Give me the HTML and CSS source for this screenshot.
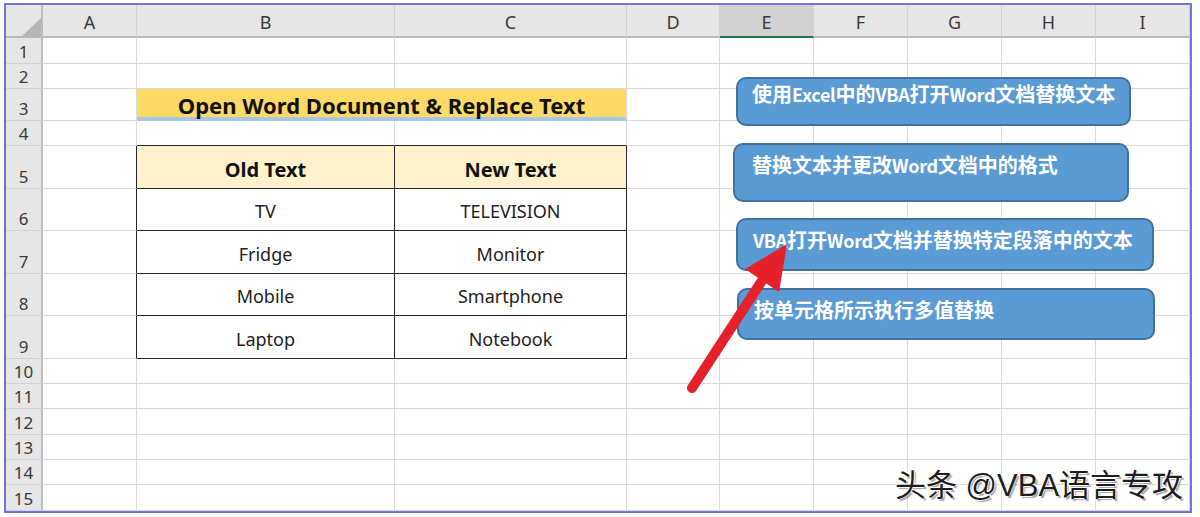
FILE: index.html
```html
<!DOCTYPE html>
<html lang="zh-CN">
<head>
  <meta charset="UTF-8">
  <meta name="viewport" content="width=device-width, initial-scale=1.0">
  <title>Open Word Document &amp; Replace Text</title>
  <link rel="stylesheet" href="styles.css">
</head>
<body>
  <div class="page">
    <!-- 工作表 -->
    <div class="sheet">
      <div class="corner"></div><div class="ch">A</div><div class="ch">B</div><div class="ch">C</div><div class="ch">D</div><div class="ch sel">E</div><div class="ch">F</div><div class="ch">G</div><div class="ch">H</div><div class="ch">I</div>

      <div class="rh">1</div><div class="c"></div><div class="c"></div><div class="c"></div><div class="c"></div><div class="c"></div><div class="c"></div><div class="c"></div><div class="c"></div><div class="c"></div>
      <div class="rh">2</div><div class="c"></div><div class="c"></div><div class="c"></div><div class="c"></div><div class="c"></div><div class="c"></div><div class="c"></div><div class="c"></div><div class="c"></div>
      <div class="rh">3</div><div class="c"></div><div class="c title">Open Word Document &amp; Replace Text</div><div class="c"></div><div class="c"></div><div class="c"></div><div class="c"></div><div class="c"></div><div class="c"></div>
      <div class="rh">4</div><div class="c"></div><div class="c tt"></div><div class="c tt"></div><div class="c"></div><div class="c"></div><div class="c"></div><div class="c"></div><div class="c"></div><div class="c"></div>

      <div class="rh">5</div><div class="c tl"></div><div class="t th">Old Text</div><div class="t th">New Text</div><div class="c"></div><div class="c"></div><div class="c"></div><div class="c"></div><div class="c"></div><div class="c"></div>
      <div class="rh">6</div><div class="c tl"></div><div class="t">TV</div><div class="t">TELEVISION</div><div class="c"></div><div class="c"></div><div class="c"></div><div class="c"></div><div class="c"></div><div class="c"></div>
      <div class="rh">7</div><div class="c tl"></div><div class="t">Fridge</div><div class="t">Monitor</div><div class="c"></div><div class="c"></div><div class="c"></div><div class="c"></div><div class="c"></div><div class="c"></div>
      <div class="rh">8</div><div class="c tl"></div><div class="t">Mobile</div><div class="t">Smartphone</div><div class="c"></div><div class="c"></div><div class="c"></div><div class="c"></div><div class="c"></div><div class="c"></div>
      <div class="rh">9</div><div class="c tl"></div><div class="t">Laptop</div><div class="t">Notebook</div><div class="c"></div><div class="c"></div><div class="c"></div><div class="c"></div><div class="c"></div><div class="c"></div>

      <div class="rh">10</div><div class="c"></div><div class="c"></div><div class="c"></div><div class="c"></div><div class="c"></div><div class="c"></div><div class="c"></div><div class="c"></div><div class="c"></div>
      <div class="rh">11</div><div class="c"></div><div class="c"></div><div class="c"></div><div class="c"></div><div class="c"></div><div class="c"></div><div class="c"></div><div class="c"></div><div class="c"></div>
      <div class="rh">12</div><div class="c"></div><div class="c"></div><div class="c"></div><div class="c"></div><div class="c"></div><div class="c"></div><div class="c"></div><div class="c"></div><div class="c"></div>
      <div class="rh">13</div><div class="c"></div><div class="c"></div><div class="c"></div><div class="c"></div><div class="c"></div><div class="c"></div><div class="c"></div><div class="c"></div><div class="c"></div>
      <div class="rh">14</div><div class="c"></div><div class="c"></div><div class="c"></div><div class="c"></div><div class="c"></div><div class="c"></div><div class="c"></div><div class="c"></div><div class="c"></div>
      <div class="rh">15</div><div class="c"></div><div class="c"></div><div class="c"></div><div class="c"></div><div class="c"></div><div class="c"></div><div class="c"></div><div class="c"></div><div class="c"></div>
    </div>

    <!-- 浮动的形状 -->
    <div class="shape s1">使用<span class="en">Excel</span>中的<span class="en">VBA</span>打开<span class="en">Word</span>文档替换文本</div>
    <div class="shape s2">替换文本并更改<span class="en">Word</span>文档中的格式</div>
    <div class="shape s3"><span class="en">VBA</span>打开<span class="en">Word</span>文档并替换特定段落中的文本</div>
    <div class="shape s4">按单元格所示执行多值替换</div>

    <svg class="arrow" width="1200" height="517" viewBox="0 0 1200 517">
      <line x1="692" y1="388" x2="765" y2="276" stroke="#e5222b" stroke-width="10" stroke-linecap="round"/>
      <polygon points="787,244 745,269 779,292" fill="#e5222b"/>
    </svg>

    <div class="mark">头条 @VBA语言专攻</div>
  </div>
</body>
</html>
```

FILE: styles.css
```css
body {
  margin: 0;
  background-color: #fff;
  font-family: "Noto Sans", "Liberation Sans", "Noto Sans CJK SC", sans-serif;
}
.page {
  position: relative;
  width: 1200px;
  height: 517px;
  overflow: hidden;
}
.sheet {
  display: grid;
  grid-template-columns: 37px 94px 258px 232px 93px repeat(5, 94px);
  grid-template-rows: 33px 26px 25px 32px 25px 43px 42px 43px 42px 43px 25px 25px 26px 25px 25px 26px;
  width: 1184px;
  margin: 3px 0 0 4px;
  border: 2px solid #7474d6;
}
.c {
  border-right: 1px solid #dadada;
  border-bottom: 1px solid #dadada;
}
.corner {
  position: relative;
  background-color: #e6e6e6;
  border-right: 2px solid #bdbdbd;
  border-bottom: 2px solid #b8b8b8;
}
.corner::after {
  content: "";
  position: absolute;
  right: 0;
  bottom: 0;
  border-style: solid;
  border-width: 0 0 18px 19px;
  border-color: transparent transparent #b5b5b5 transparent;
}
.ch {
  display: flex;
  align-items: center;
  justify-content: center;
  padding-top: 2px;
  background-color: #e6e6e6;
  border-right: 1px solid #d2d2d2;
  border-bottom: 2px solid #b8b8b8;
  font-size: 18px;
  color: #3a3a3a;
}
.ch.sel {
  background-color: #d2d2d2;
  border-bottom-color: #217346;
}
.rh {
  display: flex;
  align-items: flex-end;
  justify-content: center;
  background-color: #e6e6e6;
  border-right: 2px solid #bdbdbd;
  border-bottom: 1px solid #d2d2d2;
  font-size: 17px;
  line-height: 22px;
  color: #3a3a3a;
}
.title {
  grid-column: span 2;
  display: flex;
  align-items: center;
  justify-content: center;
  padding-top: 3px;
  background-color: #ffd966;
  border-bottom: 4px solid #a9c6e6;
  font-weight: 700;
  font-size: 22px;
  color: #111;
}
.tt {
  border-bottom-color: #262626;
}
.tl {
  border-right-color: #262626;
}
.t {
  display: flex;
  align-items: center;
  justify-content: center;
  padding-top: 3px;
  border-right: 1px solid #262626;
  border-bottom: 1px solid #262626;
  font-size: 18px;
  color: #222;
}
.th {
  padding-top: 5px;
  background-color: #fff2cc;
  font-weight: 700;
  font-size: 20px;
  color: #111;
}
.shape {
  position: absolute;
  box-sizing: border-box;
  background-color: #5b9bd5;
  border: 2px solid #41719c;
  border-radius: 10px;
  color: #fff;
  font-family: "Noto Sans CJK SC", sans-serif;
  font-weight: 700;
  font-size: 20px;
  line-height: 24px;
  white-space: nowrap;
}
.shape .en {
  font-size: 18px;
  letter-spacing: -0.3px;
}
.s1 {
  left: 736px;
  top: 77px;
  width: 395px;
  height: 49px;
  padding: 3px 0 0 14px;
}
.s2 {
  left: 733px;
  top: 143px;
  width: 396px;
  height: 59px;
  padding: 8px 0 0 17px;
}
.s3 {
  left: 736px;
  top: 218px;
  width: 418px;
  height: 53px;
  padding: 8px 0 0 15px;
}
.s4 {
  left: 737px;
  top: 288px;
  width: 418px;
  height: 52px;
  padding: 8px 0 0 15px;
}
.arrow {
  position: absolute;
  left: 0;
  top: 0;
  pointer-events: none;
}
.mark {
  position: absolute;
  left: 895px;
  top: 468px;
  font-family: "Liberation Sans", "Noto Sans CJK SC", sans-serif;
  font-size: 31px;
  line-height: 36px;
  color: #1e1e1e;
  white-space: nowrap;
  text-shadow: -1px -1px 0 #fff, 1px -1px 0 #fff, -1px 1px 0 #fff, 2px 2px 1px rgba(0, 0, 0, 0.35);
}
```
